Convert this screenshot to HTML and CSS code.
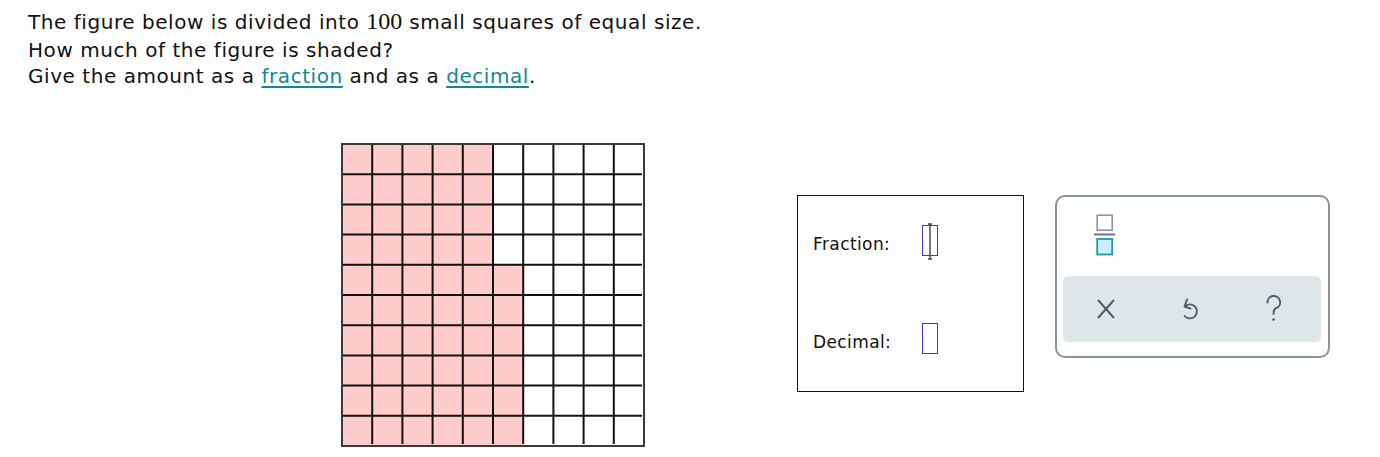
FILE: index.html
```html
<!DOCTYPE html>
<html>
<head>
<meta charset="utf-8">
<link rel="stylesheet" href="styles.css">
</head>
<body>
<div class="page">
  <div class="prompt">
    <div class="line l1">The figure below is divided into <span class="num">100</span> small squares of equal size.</div>
    <div class="line">How much of the figure is shaded?</div>
    <div class="line">Give the amount as a <a class="term" href="#">fraction</a> and as a <a class="term" href="#">decimal</a>.</div>
  </div>
  <div class="work">
    <svg class="grid" width="304" height="304" viewBox="0 0 304 304">
      <g fill="#ffcccc">
        <rect x="1" y="1" width="151" height="121"/>
        <rect x="1" y="121" width="181.2" height="182"/>
      </g>
      <g stroke="#111" stroke-width="2">
        <line x1="31.2" y1="2" x2="31.2" y2="301"/>
        <line x1="61.4" y1="2" x2="61.4" y2="301"/>
        <line x1="91.6" y1="2" x2="91.6" y2="301"/>
        <line x1="121.8" y1="2" x2="121.8" y2="301"/>
        <line x1="152" y1="2" x2="152" y2="301"/>
        <line x1="182.2" y1="2" x2="182.2" y2="301"/>
        <line x1="212.4" y1="2" x2="212.4" y2="301"/>
        <line x1="242.6" y1="2" x2="242.6" y2="301"/>
        <line x1="272.8" y1="2" x2="272.8" y2="301"/>
        <line y1="31.2" x1="2" y2="31.2" x2="301"/>
        <line y1="61.4" x1="2" y2="61.4" x2="301"/>
        <line y1="91.6" x1="2" y2="91.6" x2="301"/>
        <line y1="121.8" x1="2" y2="121.8" x2="301"/>
        <line y1="152" x1="2" y2="152" x2="301"/>
        <line y1="182.2" x1="2" y2="182.2" x2="301"/>
        <line y1="212.4" x1="2" y2="212.4" x2="301"/>
        <line y1="242.6" x1="2" y2="242.6" x2="301"/>
        <line y1="272.8" x1="2" y2="272.8" x2="301"/>
      </g>
      <rect x="1" y="1" width="302" height="302" fill="none" stroke="#3a3a3a" stroke-width="2"/>
    </svg>

    <div class="answer">
      <div class="arow">
        <span class="alabel">Fraction:</span>
        <span class="abox frac">
          <svg class="cursor" width="10" height="37" viewBox="0 0 10 37">
            <path d="M5 1 V36 M3 1 H7 M3 36 H7" stroke="#444" stroke-width="1.4" fill="none"/>
          </svg>
        </span>
      </div>
      <div class="arow">
        <span class="alabel">Decimal:</span>
        <span class="abox"></span>
      </div>
    </div>

    <div class="keypad">
      <div class="ktop">
        <svg width="22" height="42" viewBox="0 0 22 42">
          <rect x="3.2" y="1.2" width="15" height="15" fill="#fff" stroke="#8d969b" stroke-width="1.6"/>
          <rect x="0" y="19.5" width="21" height="2" fill="#6d777c"/>
          <rect x="3.2" y="25" width="15" height="15.5" fill="#c9eef6" stroke="#1f97ad" stroke-width="1.8"/>
        </svg>
      </div>
      <div class="kbar">
        <div class="kcell">
          <svg width="20" height="22" viewBox="0 0 20 22">
            <path d="M2 2 L18 20 M18 2 L2 20" stroke="#4d5d66" stroke-width="2" fill="none"/>
          </svg>
        </div>
        <div class="kcell">
          <svg width="20" height="28" viewBox="0 0 20 28">
            <path d="M5.2 11.2 A7 7 0 1 1 4.6 21" stroke="#4d5d66" stroke-width="1.9" fill="none" stroke-linecap="round"/>
            <path d="M4.5 4 V11.5 H11" stroke="#4d5d66" stroke-width="1.9" fill="none" stroke-linecap="round" stroke-linejoin="round" transform="rotate(20 4.5 11.5)"/>
          </svg>
        </div>
        <div class="kcell">
          <svg width="18" height="28" viewBox="0 0 18 28">
            <path d="M2.5 7.5 A6.3 6.3 0 1 1 11 13.2 C9 14.3 8.6 15.5 8.6 17.5 V19" stroke="#4d5d66" stroke-width="1.9" fill="none" stroke-linecap="round"/>
            <circle cx="8.6" cy="24.5" r="1.3" fill="#4d5d66"/>
          </svg>
        </div>
      </div>
    </div>
  </div>
</div>
</body>
</html>
```

FILE: styles.css
```css
html, body {
  margin: 0;
  padding: 0;
  background: #fff;
}

.page {
  width: 1380px;
  height: 457px;
  overflow: hidden;
  font-family: "DejaVu Sans", Verdana, sans-serif;
  color: #111;
}

.prompt {
  padding: 8px 0 0 28px;
  font-size: 20px;
  letter-spacing: 0.55px;
}

.line {
  height: 26px;
  line-height: 26px;
  white-space: nowrap;
}

.line.l1 {
  height: 29px;
  line-height: 29px;
}

.num {
  font-family: "Liberation Serif", "Times New Roman", serif;
  font-size: 24px;
  letter-spacing: 0;
  line-height: 20px;
}

.term {
  color: #0f8a91;
  text-decoration: underline;
  text-underline-offset: 3px;
}

.work {
  display: flex;
  align-items: flex-start;
  margin-top: 54px;
  padding-left: 341px;
}

.grid {
  display: block;
  flex: none;
}

.answer {
  margin: 52px 0 0 152px;
  width: 225px;
  border: 1px solid #111;
  padding-top: 29px;
  box-sizing: content-box;
  display: flex;
  flex-direction: column;
  gap: 67px;
  height: 166px;
}

.arow {
  display: flex;
  align-items: center;
  height: 31px;
  padding-left: 15px;
}

.alabel {
  width: 109px;
  font-size: 17px;
  letter-spacing: 0.4px;
  position: relative;
  top: 3px;
}

.abox {
  position: relative;
  width: 14px;
  height: 29px;
  border: 1px solid #3a3ad0;
  display: block;
}

.cursor {
  position: absolute;
  left: 2px;
  top: -3px;
}

.keypad {
  margin: 52px 0 0 31px;
  width: 258px;
  height: 152px;
  border: 2px solid #86959d;
  border-radius: 10px;
  padding: 0 7px 7px 6px;
  box-sizing: content-box;
  display: flex;
  flex-direction: column;
}

.ktop {
  height: 79px;
  padding: 17px 0 0 31px;
  box-sizing: border-box;
}

.ktop svg {
  display: block;
}

.kbar {
  height: 66px;
  background: #dfe6e9;
  border-radius: 5px;
  display: grid;
  grid-template-columns: 84px 84px 84px;
  padding-left: 1px;
  align-items: center;
}

.kcell {
  display: flex;
  justify-content: center;
  align-items: center;
}

.kcell svg {
  display: block;
}
```
